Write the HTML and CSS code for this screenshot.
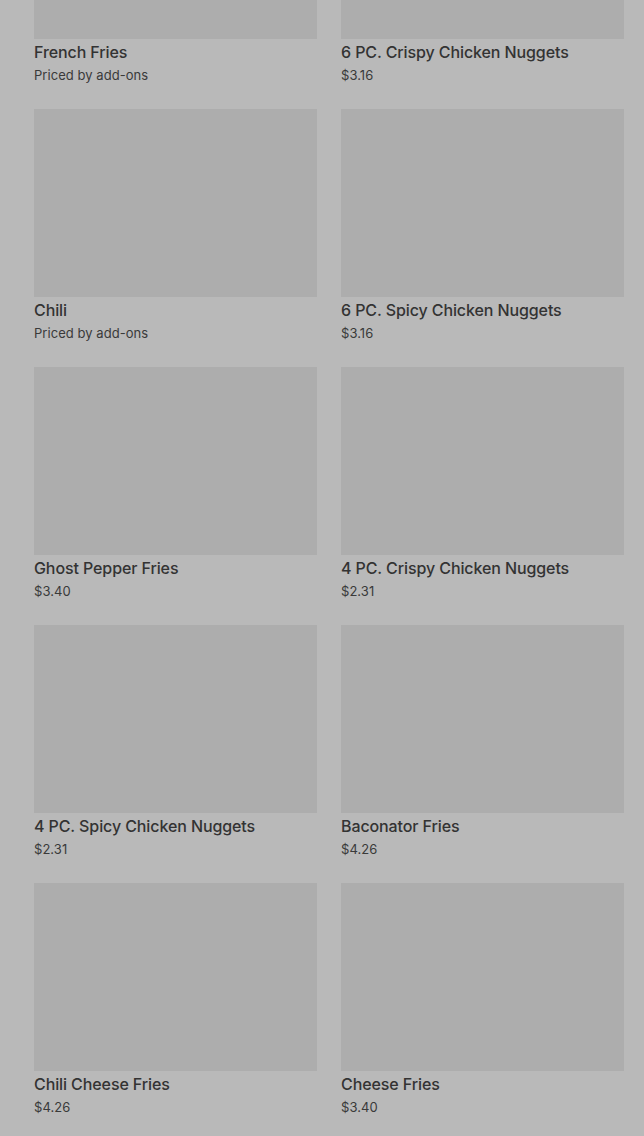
FILE: index.html
```html
<!DOCTYPE html>
<html>
<head>
<meta charset="utf-8">
<link rel="stylesheet" href="styles.css">
</head>
<body>
<main class="menu">
  <div class="grid">
    <div class="item"><div class="thumb"></div><div class="name">French Fries</div><div class="price">Priced by add-ons</div></div>
    <div class="item"><div class="thumb"></div><div class="name">6 PC. Crispy Chicken Nuggets</div><div class="price">$3.16</div></div>
    <div class="item"><div class="thumb"></div><div class="name">Chili</div><div class="price">Priced by add-ons</div></div>
    <div class="item"><div class="thumb"></div><div class="name">6 PC. Spicy Chicken Nuggets</div><div class="price">$3.16</div></div>
    <div class="item"><div class="thumb"></div><div class="name">Ghost Pepper Fries</div><div class="price">$3.40</div></div>
    <div class="item"><div class="thumb"></div><div class="name">4 PC. Crispy Chicken Nuggets</div><div class="price">$2.31</div></div>
    <div class="item"><div class="thumb"></div><div class="name">4 PC. Spicy Chicken Nuggets</div><div class="price">$2.31</div></div>
    <div class="item"><div class="thumb"></div><div class="name">Baconator Fries</div><div class="price">$4.26</div></div>
    <div class="item"><div class="thumb"></div><div class="name">Chili Cheese Fries</div><div class="price">$4.26</div></div>
    <div class="item"><div class="thumb"></div><div class="name">Cheese Fries</div><div class="price">$3.40</div></div>
  </div>
</main>
</body>
</html>
```
FILE: styles.css
```css
html, body {
  margin: 0;
  padding: 0;
  background: #b9b9b9;
  font-family: Inter, "Noto Sans", sans-serif;
  overflow: hidden;
}
.menu {
  padding: 0 20px 0 34px;
}
.grid {
  margin-top: -149px;
  display: grid;
  grid-template-columns: 283px 283px;
  column-gap: 24px;
  row-gap: 25px;
}
.item {
  display: flex;
  flex-direction: column;
}
.thumb {
  height: 188px;
  background: #adadad;
}
.name {
  margin-top: 3px;
  font-size: 16px;
  line-height: 20px;
  font-weight: 500;
  letter-spacing: -0.1px;
  color: #333333;
}
.price {
  margin-top: 4px;
  font-size: 13px;
  line-height: 18px;
  letter-spacing: 0.05px;
  color: #3a3a3a;
}
```
